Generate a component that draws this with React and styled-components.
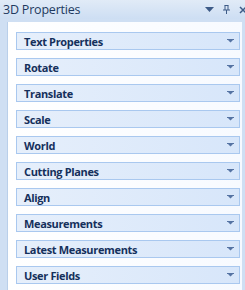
import React from 'react';
import styled, { createGlobalStyle } from 'styled-components';

const GlobalStyle = createGlobalStyle`
  html, body {
    margin: 0;
    padding: 0;
    background: #d3e2f5;
  }
`;

const Panel = styled.div`
  width: 245px;
  height: 290px;
  display: flex;
  flex-direction: column;
  overflow: hidden;
  font-family: "Open Sans", "Noto Sans", sans-serif;
`;

const TitleBar = styled.div`
  height: 19px;
  display: flex;
  align-items: center;
  padding-left: 3px;
  background: linear-gradient(#e1ebf7, #cddef3);
  color: #1e3a60;
  font-size: 12.5px;
  letter-spacing: -0.2px;
`;

const Title = styled.span`
  flex: 1;
`;

const TitleButtons = styled.div`
  display: flex;
  align-items: center;
  gap: 9px;
  margin-right: -2px;

  svg {
    display: block;
  }
`;

const Body = styled.div`
  flex: 1;
  display: flex;
  padding: 3px 3px 0 7px;
  background: #cfdff3;
`;

const Content = styled.div`
  flex: 1;
  display: flex;
  flex-direction: column;
  gap: 8px;
  padding: 10px 2px 0 8px;
  border-left: 1px solid #b9cfea;
  background: linear-gradient(90deg, #ffffff, #f7faff);
`;

const Header = styled.div`
  height: 16px;
  display: flex;
  align-items: center;
  justify-content: space-between;
  padding: 0 5px 0 7px;
  border: 1px solid #a9c8ef;
  background: linear-gradient(90deg, #e6effb, #d7e6fa);
  color: #15305c;
  font-size: 11px;
  font-weight: 700;
  letter-spacing: -0.35px;
`;

const Chevron = () => (
  <svg width="7" height="4" viewBox="0 0 7 4">
    <path d="M0 0h7v1H0zM1 1h5L3.5 3.5z" fill="#5573a3" />
  </svg>
);

const sections = [
  'Text Properties',
  'Rotate',
  'Translate',
  'Scale',
  'World',
  'Cutting Planes',
  'Align',
  'Measurements',
  'Latest Measurements',
  'User Fields',
];

export default function App() {
  return (
    <Panel>
      <GlobalStyle />
      <TitleBar>
        <Title>3D Properties</Title>
        <TitleButtons>
          <svg width="9" height="5" viewBox="0 0 9 5">
            <path d="M0 0h9L4.5 5z" fill="#3d5b87" />
          </svg>
          <svg width="7" height="9" viewBox="0 0 7 9">
            <path d="M1.5 0.5h4M2 0.5v4.5M5 0.5v4.5M0 5h7M3.5 5v4" stroke="#3d5b87" strokeWidth="1" fill="none" />
          </svg>
          <svg width="8" height="8" viewBox="0 0 8 8">
            <path d="M1 1l6 6M7 1L1 7" stroke="#3d5b87" strokeWidth="1.5" />
          </svg>
        </TitleButtons>
      </TitleBar>
      <Body>
        <Content>
          {sections.map((s) => (
            <Header key={s}>
              <span>{s}</span>
              <Chevron />
            </Header>
          ))}
        </Content>
      </Body>
    </Panel>
  );
}
